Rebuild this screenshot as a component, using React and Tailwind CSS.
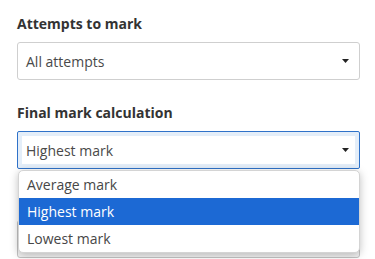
function Caret() {
  return (
    <svg width="7" height="4" viewBox="0 0 7 4" className="shrink-0">
      <path d="M0 0h7L3.5 4z" fill="#222" />
    </svg>
  );
}

export default function App() {
  const options = ["Average mark", "Highest mark", "Lowest mark"];
  const selected = "Highest mark";

  return (
    <div
      className="h-[259px] w-[375px] overflow-hidden bg-white pl-[17px] pr-[15px] pt-[14px] text-[14px] text-[#3a3a3a]"
      style={{ fontFamily: '"Open Sans", "Liberation Sans", sans-serif' }}
    >
      <div className="text-[14px] font-bold leading-5 text-[#333]">Attempts to mark</div>
      <div className="mt-2 flex h-[38px] items-center justify-between rounded-[3px] border border-[#cfcfcf] bg-white pl-[8px] pr-[10px]">
        <span className="text-[#494949]">All attempts</span>
        <Caret />
      </div>

      <div className="mt-[23px] text-[14px] font-bold leading-5 text-[#333]">Final mark calculation</div>
      <div className="relative mt-[8px]">
        <div className="flex h-[38px] items-center justify-between rounded-[2px] border border-[#2f72c9] bg-white pl-[8px] pr-[10px] shadow-[inset_0_0_0_4px_#e4eef9]">
          <span className="text-[#494949]">Highest mark</span>
          <Caret />
        </div>

        <div className="mt-[51px] h-[38px] rounded-[3px] border border-[#c4c4c4] bg-[#f3f3f3]" />

        <div className="absolute left-px right-0 top-[39px] z-10 overflow-hidden rounded-[5px] border border-[#d4d4d4] bg-white shadow-[0_2px_8px_rgba(0,0,0,0.25)]">
          {options.map((o) => (
            <div
              key={o}
              className={`flex h-[27px] items-center pl-[8px] ${
                o === selected ? "bg-[#1c69d4] text-white" : "text-[#474747]"
              }`}
            >
              {o}
            </div>
          ))}
        </div>
      </div>
    </div>
  );
}
